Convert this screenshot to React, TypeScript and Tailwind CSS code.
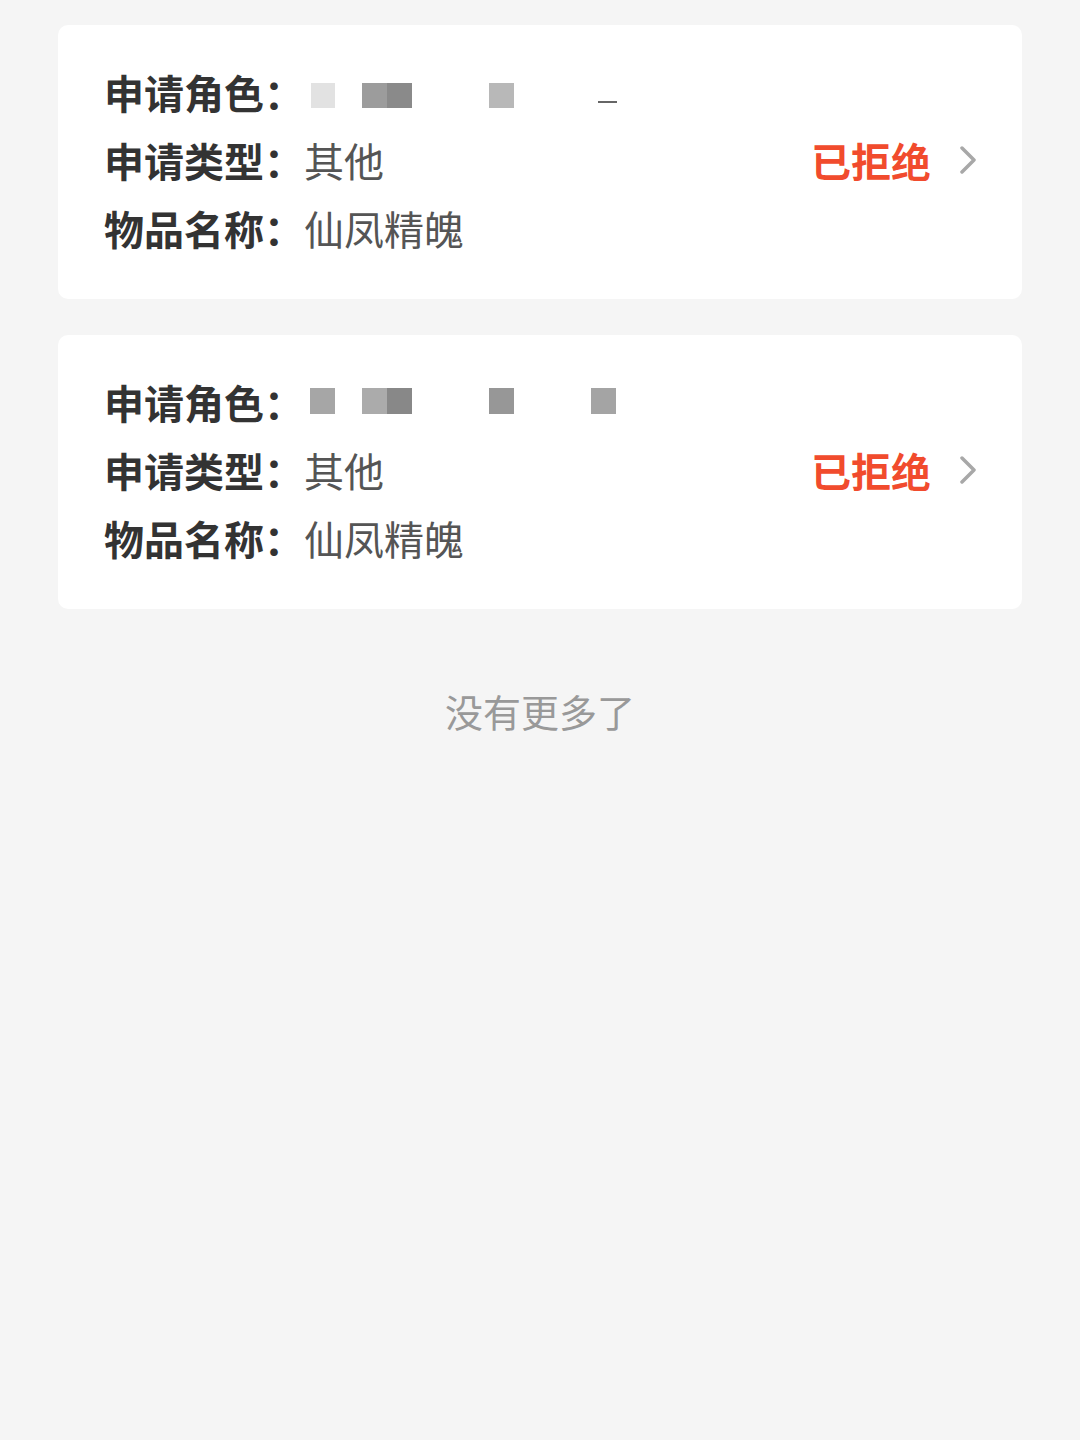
import * as React from "react";

const font = { fontFamily: '"Noto Sans CJK SC", "Noto Sans", sans-serif' };

function Mosaic({ variant }: { variant: number }) {
  if (variant === 0) {
    return (
      <div className="flex items-center h-[25px] mt-[6px]">
        <div className="ml-[7px] w-[24px] h-[25px] bg-[#e2e2e2]" />
        <div className="ml-[27px] w-[25px] h-[25px] bg-[#9c9c9c]" />
        <div className="w-[25px] h-[25px] bg-[#8a8a8a]" />
        <div className="ml-[77px] w-[25px] h-[25px] bg-[#b8b8b8]" />
        <div className="ml-[84px] w-[19px] h-[2px] mt-[14px] bg-[#666]" />
      </div>
    );
  }
  return (
    <div className="flex items-center h-[26px] -mt-[2px]">
      <div className="ml-[6px] w-[25px] h-[26px] bg-[#a6a6a6]" />
      <div className="ml-[27px] w-[25px] h-[26px] bg-[#ababab]" />
      <div className="w-[25px] h-[26px] bg-[#888888]" />
      <div className="ml-[77px] w-[25px] h-[26px] bg-[#979797]" />
      <div className="ml-[77px] w-[25px] h-[26px] bg-[#a4a4a4]" />
    </div>
  );
}

function Row({ label, children }: { label: string; children: React.ReactNode }) {
  return (
    <div className="flex items-center h-[68px]">
      <span className="text-[40px] leading-[68px] font-bold text-[#333333] whitespace-nowrap">
        {label}：
      </span>
      {children}
    </div>
  );
}

function ApplyCard({ variant }: { variant: number }) {
  return (
    <div className="bg-white rounded-[10px] mx-[58px] pl-[46px] pr-[45px] pt-[33px] pb-[37px] flex items-center">
      <div className="flex-1 flex flex-col">
        <Row label="申请角色">
          <Mosaic variant={variant} />
        </Row>
        <Row label="申请类型">
          <span className="text-[40px] leading-[68px] text-[#555555]">其他</span>
        </Row>
        <Row label="物品名称">
          <span className="text-[40px] leading-[68px] text-[#555555]">仙凤精魄</span>
        </Row>
      </div>
      <div className="flex items-center gap-[28px]">
        <span className="text-[40px] font-semibold text-[#f14b2d]">已拒绝</span>
        <svg width="18" height="28" viewBox="0 0 18 28" fill="none">
          <path d="M3 2 L15 14 L3 26" stroke="#a8a8a8" strokeWidth="3.5" strokeLinecap="round" strokeLinejoin="round" />
        </svg>
      </div>
    </div>
  );
}

export default function App() {
  return (
    <div className="min-h-[1440px] w-[1080px] bg-[#f5f5f5] pt-[25px]" style={font}>
      <div className="flex flex-col gap-[36px]">
        <ApplyCard variant={0} />
        <ApplyCard variant={1} />
      </div>
      <p className="mt-[77px] text-center text-[38px] leading-[50px] text-[#999999]">没有更多了</p>
    </div>
  );
}
